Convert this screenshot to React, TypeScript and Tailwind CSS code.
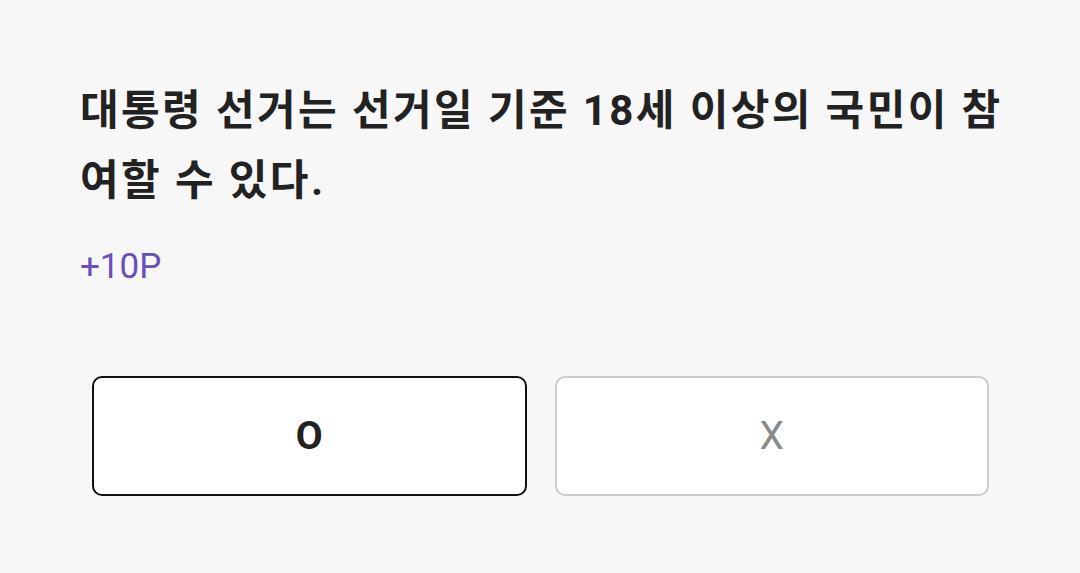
export default function App() {
  return (
    <div
      className="min-h-[573px] w-full bg-[#f7f7f7] text-[#222222]"
      style={{ fontFamily: "Roboto, 'Noto Sans CJK KR', sans-serif" }}
    >
      <div className="pl-[80px] pt-[76px]">
        <h1 className="w-[940px] text-[42px] font-bold leading-[70px] tracking-[2.4px]">
          대통령 선거는 선거일 기준 18세 이상의 국민이 참여할 수 있다.
        </h1>
        <p className="mt-[31px] text-[35px] leading-[40px] text-[#6a4fb8]">+10P</p>
      </div>
      <div className="mt-[89px] grid grid-cols-2 gap-[28px] pl-[92px] pr-[91px]">
        <button className="flex h-[120px] items-center justify-center rounded-[10px] border-2 border-[#111111] bg-white text-[39px] font-bold text-[#222222]">
          O
        </button>
        <button className="flex h-[120px] items-center justify-center rounded-[10px] border-2 border-[#cccccc] bg-white text-[39px] text-[#8a8a8a]">
          X
        </button>
      </div>
    </div>
  )
}
